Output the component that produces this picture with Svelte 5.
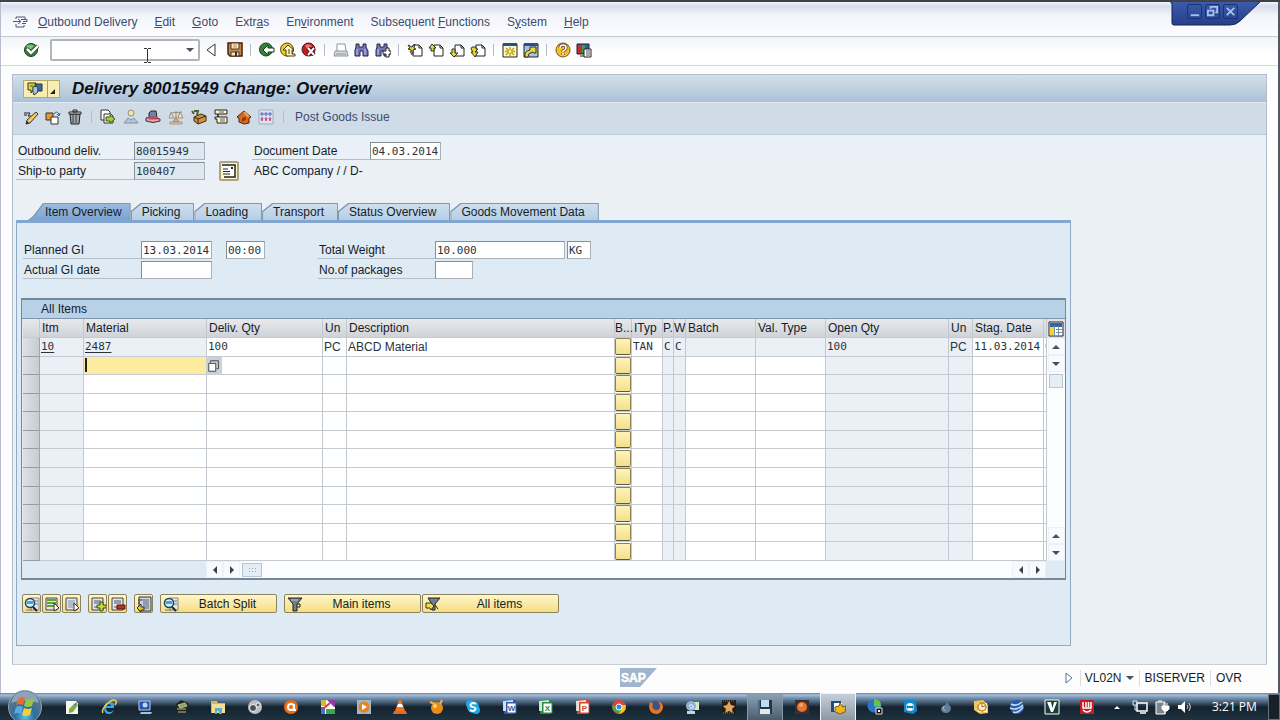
<script lang="ts">
  type Column = {
    key: string;
    label: string;
    width?: number;
    shaded?: boolean;
  };

  const menus = [
    ["", "O", "utbound Delivery"],
    ["", "E", "dit"],
    ["", "G", "oto"],
    ["Extr", "a", "s"],
    ["En", "v", "ironment"],
    ["Subsequent ", "F", "unctions"],
    ["S", "y", "stem"],
    ["", "H", "elp"],
  ];

  const toolGroups = [
    ["back", "up", "exit"],
    ["print", "find", "findNext"],
    ["firstPage", "prevPage", "nextPage", "lastPage"],
    ["newSession", "shortcut"],
    ["help", "layout"],
  ];

  const editTools = ["pencil", "other", "trash"];
  const docTools = ["copy", "partner", "hat", "scale", "pack", "log", "house", "serial"];

  const tabs = ["Item Overview", "Picking", "Loading", "Transport", "Status Overview", "Goods Movement Data"];

  const columns: Column[] = [
    { key: "itm", label: "Itm", width: 44, shaded: true },
    { key: "material", label: "Material", width: 123 },
    { key: "qty", label: "Deliv. Qty", width: 116 },
    { key: "un", label: "Un", width: 24 },
    { key: "desc", label: "Description" },
    { key: "b", label: "B...", width: 17 },
    { key: "ityp", label: "ITyp", width: 31 },
    { key: "p", label: "P.", width: 11, shaded: true },
    { key: "w", label: "W", width: 12, shaded: true },
    { key: "batch", label: "Batch", width: 70 },
    { key: "val", label: "Val. Type", width: 70 },
    { key: "open", label: "Open Qty", width: 123, shaded: true },
    { key: "un2", label: "Un", width: 24, shaded: true },
    { key: "stag", label: "Stag. Date", width: 71 },
    { key: "more", label: "", width: 3 },
  ];

  const item: Record<string, string> = {
    itm: "10",
    material: "2487",
    qty: "100",
    un: "PC",
    desc: "ABCD Material",
    ityp: "TAN",
    p: "C",
    w: "C",
    open: "100",
    un2: "PC",
    stag: "11.03.2014",
    more: "0",
  };
  const sans = ["un", "desc", "un2"];
  const locked = ["material", "batch", "val"];
  const rows = Array.from({ length: 12 }, (_, i) => i);

  const iconButtons = [["detail", "selectAll", "deselect"], ["insert", "remove"], ["moveRow"]];
  const textButtons = [
    { icon: "detail", label: "Batch Split", cls: "split" },
    { icon: "filter", label: "Main items", cls: "wide" },
    { icon: "filterOff", label: "All items", cls: "wide close" },
  ];

  const taskMain = [
    "notepad", "ie", "remote", "bug", "folder", "camera", "avast", "picasa", "media", "vlc", "gom",
    "skype", "word", "excel", "ppt", "chrome", "firefox", "messenger", "star", "disk", "record", "sap", "pie",
  ];
  const taskMore = ["viewer", "drop", "outlook", "earth", "vee", "red"];

  const page = `<path d="M6 3h6l3 3v8H6z" fill="#fff" stroke="#222"/><path d="M12 3v3h3" fill="none" stroke="#222"/>`;
  const grid = `<path d="M2 2h11v12H2z" fill="#dfe6ee" stroke="#444"/>`;
  const binoculars = `<path d="M2 2h3v3h4V2h3v3l2 4v5H9V9H6v5H1V8l1-3z" fill="#7577b4" stroke="#24244c"/><path d="M3 7v6M11 7v6" stroke="#c4c5e8"/>`;
  const office = (c: string, t: string) =>
    `<path d="M2 1h12v11l-2 3H2z" fill="${c}"/><path d="M1 2l10-1v2H4v9H1z" fill="#fff" opacity=".8"/><path d="M5 4h9v10H5z" fill="#fff" stroke="${c}"/><text x="9.5" y="12" font-size="8" font-weight="700" text-anchor="middle" fill="${c}" font-family="Liberation Sans">${t}</text>`;

  const icons: Record<string, string> = {
    menu: `<path d="M4 5V3h9v2M4 10v3h8v-2" fill="none" stroke="#4a5878"/><path d="M1 7.500h7M6 5l3 2.500L6 10M9 5.500h6v2h-4M10 9.500h4" fill="none" stroke="#4a5878"/>`,
    check: `<circle cx="8" cy="8" r="6.500" fill="#39863c" stroke="#173d1b"/><path d="M3 4q5-3 8 0L7 8z" fill="#82c184"/><path d="M4 7l4 4 7-7" fill="none" stroke="#173d1b" stroke-width="4"/><path d="M4 7l4 4 7-7" fill="none" stroke="#fff" stroke-width="2.500"/>`,
    enter: `<path d="M12 2v12L4 8z" fill="#fff" stroke="#333"/>`,
    save: `<path d="M1 1h14v13H3l-2-2z" fill="#c88748" stroke="#3d2411" stroke-width="1.500"/><path d="M4 1h8v6H4z" fill="#f8ecd1" stroke="#55351d"/><path d="M6 3h4M6 5h4" stroke="#c88748"/><path d="M4 10h8v4H4z" fill="#f1e6d4" stroke="#55351d"/><path d="M9 10v4" stroke="#333" stroke-width="2"/>`,
    back: `<circle cx="7" cy="7.500" r="6.500" fill="#348438" stroke="#173d1b"/><path d="M4 8l5-5v3h6v4H9v3z" fill="#fff" stroke="#143a18"/>`,
    up: `<circle cx="7" cy="7.500" r="6.500" fill="#eacb28" stroke="#5b4a14"/><path d="M3 8l5-5 6 5h-2v4h3v2H6V8z" fill="#fff9bd" stroke="#493b13"/><path d="M9 7v5" stroke="#493b13"/>`,
    exit: `<circle cx="7.500" cy="7.500" r="6.500" fill="#c11d22" stroke="#53141a"/><path d="M4 3q4-2 7 1L6 7z" fill="#e6777a"/><path d="M7 6l6 7M13 6l-6 7" stroke="#540b0d" stroke-width="4"/><path d="M7 6l6 7M13 6l-6 7" stroke="#fff" stroke-width="2"/>`,
    print: `<path d="M4 9V2h8l1 7" fill="#fff" stroke="#8e959d"/><path d="M2 9h12l1 5H1z" fill="#d6dade" stroke="#8e959d"/><path d="M3 12h10" stroke="#8e959d"/>`,
    find: binoculars,
    findNext: binoculars + `<path d="M8 9h3V6h3v3h2v3h-2v3h-3v-3H8z" fill="#fff" stroke="#222"/>`,
    firstPage: page + `<path d="M1 3l4 2 3-3-1 4 2 1-3 1v4L4 8 1 7l2-1z" fill="#e3d928" stroke="#333"/><path d="M3 9l2 4" stroke="#333"/>`,
    prevPage: page + `<path d="M1 6l3-4 4 4H6v3H3V6z" fill="#e3d928" stroke="#333"/>`,
    nextPage: page + `<path d="M3 7h3v4h3l-4 4-4-4h2z" fill="#e3d928" stroke="#333"/>`,
    lastPage: page + `<path d="M2 5h4v2h2L5 10h3l-3 5-4-5h2L1 7z" fill="#e3d928" stroke="#333"/>`,
    newSession: `<path d="M1 2h14v13H1z" fill="#fff8c8" stroke="#222"/><path d="M1 1h14v3H1z" fill="#28508f"/><path d="M4 6l3 3m2 0l3-3M4 13l3-3m2 0l3 3M8 5v3m0 3v3M3 9.500h3m4 0h3" stroke="#c3a60c" stroke-width="1.500"/>`,
    shortcut: `<path d="M1 2h14v13H1z" fill="#a9c4dd" stroke="#222"/><path d="M1 1h14v3H1z" fill="#28508f"/><path d="M2 15q-1-6 5-7V5h6v6h-2L9 10q-4 1-4 5z" fill="#efd735" stroke="#333"/>`,
    help: `<circle cx="8" cy="8" r="7" fill="#f4c22c" stroke="#6f5a2d"/><path d="M5 6q0-3 3-3t3 2.500Q11 8 8 9v1M8 11v2" fill="none" stroke="#6b2a20" stroke-width="3"/><path d="M5 6q0-3 3-3t3 2.500Q11 8 8 9v1M8 11v2" fill="none" stroke="#fff" stroke-width="1.600"/>`,
    layout: `<path d="M1 2h12v10H1z" fill="#3457b6" stroke="#222"/><path d="M2 3h4v8H2z" fill="#c52e35"/><path d="M6 3h3v8H6z" fill="#35a44c"/><path d="M4 14h5" stroke="#222"/><path d="M8 7h7v8H8z" fill="#fff" stroke="#222"/><path d="M10 9h4M10 11h4M10 13h4" stroke="#555"/>`,
    title: `<path d="M1 2h8v7H6l-2 3V9H1z" fill="#e9d530" stroke="#333"/><path d="M8 3h7v7H8z" fill="#396a9e" stroke="#203547"/><path d="M6 6q4-2 5 2t-4 6q-2-4-1-8z" fill="#a8c7d6" stroke="#263746"/><path d="M3 5h3" stroke="#444"/>`,
    pencil: `<path d="M1 4h6l-2 3h3M1 6h3" stroke="#222" fill="none"/><path d="M13 3l2 2-8 9-4 1 1-4z" fill="#f3cc65" stroke="#333"/><path d="M3 15l1-3 2 2z" fill="#222"/>`,
    other: `<path d="M1 4h7v7H1z" fill="#e6982b" stroke="#333"/><path d="M6 8h7v7H6z" fill="#fff" stroke="#333"/><path d="M9 5q2-4 5 0v2m-2-2l2 2 1-3" fill="none" stroke="#41618c"/>`,
    trash: `<path d="M3 5h10l-1 10H4z" fill="#9da4ac" stroke="#222"/><path d="M2 3h12v2H2zM6 1h4v2H6z" fill="#e6e8ea" stroke="#222"/><path d="M6 6v8M9 6v8" stroke="#444"/>`,
    copy: `<path d="M1 1h7l2 2v8H1z" fill="#fff" stroke="#333"/><path d="M4 5h7l2 2v7H4z" fill="#fff" stroke="#333"/><path d="M6 8h4V6l5 4-5 4v-2H6z" fill="#a6cc38" stroke="#365b1c"/>`,
    partner: `<circle cx="8" cy="4" r="3" fill="#eee2b0" stroke="#988f74"/><path d="M1 14l4-5 3 2 3-2 4 5z" fill="#b3c5d7" stroke="#7f93a6"/>`,
    hat: `<path d="M4 9V4l2-2h5l1 7z" fill="#6f84a8" stroke="#222"/><path d="M1 9q7-2 14 1v2q-7 3-14 0z" fill="#e7a3b2" stroke="#333"/><path d="M4 9h8" stroke="#d43f5c" stroke-width="3"/>`,
    scale: `<path d="M2 13h12v2H2zM8 2v9M2 4l12-1M3 4l-2 5h5zM12 3l-2 6h5z" fill="#f1e4cc" stroke="#9c8c79"/><path d="M5 13l3-5 3 5z" fill="#dda47c" stroke="#9c8c79"/>`,
    pack: `<path d="M3 8l7-3 5 2v5l-8 3-4-3z" fill="#d79235" stroke="#3b2a1a"/><path d="M3 8l4 2 8-3M7 10v5" fill="none" stroke="#3b2a1a"/><path d="M1 2l2 3M3 2h4l-1 4" fill="none" stroke="#4b622c" stroke-width="2"/>`,
    log: `<path d="M2 1h12v4H5v3h9v6H4v-4H2V8h3V5H2z" fill="#fff7c7" stroke="#222"/><path d="M6 3h5M7 10h5M7 12h5" stroke="#666"/>`,
    house: `<path d="M1 8l7-6 7 6-2 1v5l-5 1-5-2V9z" fill="#dd681a" stroke="#4c230d"/><path d="M6 13V9l4-1v3l-3 1" fill="#863a15"/><path d="M8 3l5 5" stroke="#f3a15b" stroke-width="2"/>`,
    serial: `<path d="M1 1h14v14H1z" fill="#dbe2f4" stroke="#a4acc0"/><path d="M3 6V4h2v2zM7 6V4h2v2zM11 6V4h2v2z" fill="none" stroke="#5363be"/><path d="M3 9l1 3 1-3zM7 9l1 3 1-3zM11 9l1 3 1-3z" fill="none" stroke="#c04b75"/>`,
    address: `<path d="M2 2h12v12H2z" fill="#fff"/><path d="M1 2h13v12H3" fill="none" stroke="#222" stroke-width="1.500"/><path d="M2 6h5M2 8.500h7M2 11h7" stroke="#222"/><path d="M10 4h2v2h-2z" fill="#222"/>`,
    f4: `<path d="M4 4V2h9v9h-2" fill="none" stroke="#333"/><path d="M2 5h8v9H2z" fill="#fff" stroke="#333"/>`,
    config: `<path d="M1 1h14v14H1z" fill="#fff" stroke="#222"/><path d="M2 2h12v4H2z" fill="#2d67a9"/><path d="M2 6h5v8H2z" fill="#f2d338"/><path d="M6.500 5v9M10.500 5v9M8 8.500h6M8 11.500h6" stroke="#7090b5"/>`,
    detail: `<path d="M7 2h8v12H7z" fill="#e3e5e7" stroke="#888"/><path d="M11 5h3M11 8h3" stroke="#777"/><circle cx="6" cy="7" r="4.500" fill="#d8f1fc" stroke="#194260" stroke-width="1.500"/><path d="M3 5h6v3H3z" fill="#4ba2d2"/><path d="M9 11l4 4" stroke="#222" stroke-width="2"/><path d="M2 14h6" stroke="#777"/>`,
    selectAll: grid + `<path d="M3 4h9M3 7h9M3 10h9" stroke="#5da52c" stroke-width="2"/><path d="M10 7l5 5-5 3z" fill="#fff" stroke="#333"/>`,
    deselect: grid + `<path d="M4 5h7M4 7h7M4 9h7M4 11h5" stroke="#7b91a9"/><path d="M10 7l5 5-5 3z" fill="#fff" stroke="#333"/>`,
    insert: grid + `<path d="M4 5h7M4 7h7M4 11h5" stroke="#555"/><path d="M7 9h3V6h3v3h3v3h-3v3h-3v-3H7z" fill="#c5d83d" stroke="#31541c"/>`,
    remove: grid + `<path d="M4 5h7M4 7h7M4 11h5" stroke="#555"/><path d="M7 9h8v4H7z" fill="#c72c22" stroke="#4d1811"/>`,
    moveRow: `<path d="M3 1h12v14H3z" fill="#cdd4df" stroke="#333"/><path d="M6 4h7M7 6h6M7 8h6M7 10h6M6 12h7" stroke="#56657d"/><path d="M1 12l4-4v3h3v3H5v2z" fill="#e3cb29" stroke="#333"/><path d="M2 4h4M2 7h2" stroke="#333"/>`,
    filter: `<path d="M1 2h14l-5 6v7H6V8z" fill="#737f8c" stroke="#222"/><path d="M4 4h7" stroke="#c1c9d1"/><path d="M10 8h3v3h-3" fill="none" stroke="#222"/>`,
    filterOff: `<path d="M3 2h12l-5 6v6H7V8z" fill="#737f8c" stroke="#222"/><path d="M1 7h5l3 3-3 4-1-2H1z" fill="#f3dd4b" stroke="#333"/><path d="M10 9l3 4" stroke="#222"/>`,
    notepad: `<path d="M2 2h10l2 2v11H2z" fill="#f5f6ed"/><path d="M5 10l6-6 3 2-5 7-4 1z" fill="#85ad43"/><path d="M10 6l4-3" stroke="#376b88"/>`,
    ie: `<path d="M13 9H5q0 4 4 4 2 0 4-2-2 4-5 4-5 0-5-6t6-6q5 0 4 6M5.500 7h4.500q0-2-2-2t-2.500 2" fill="#39a7e8"/><path d="M2 14Q0 11 6 5t9-3q1 1-1 4" fill="none" stroke="#f6cf40" stroke-width="1.500"/>`,
    remote: `<path d="M2 2h11v9H2z" fill="#2151b6" stroke="#b9d0f0"/><circle cx="8" cy="6" r="2.500" fill="#bcd7fa"/><path d="M4 13h11l-1 2H3z" fill="#acbfd8"/>`,
    bug: `<path d="M2 5l5-4 7 3 1 6-5 5-8-2z" fill="#23271e"/><path d="M4 6l7-2 2 3-7 2zM3 10h9M4 13h8" fill="#93a367" stroke="#b9bd96"/>`,
    folder: `<path d="M1 2h6l1 2h7v10H1z" fill="#dcb451"/><path d="M2 5h13v9H2z" fill="#f3df92"/><path d="M5 9h7v6H9v-3H7v3H5z" fill="#56aed4"/>`,
    camera: `<circle cx="8" cy="8" r="7" fill="#b9bfc4"/><circle cx="6" cy="9" r="3.500" fill="#4a5257" stroke="#f2f3f4"/><circle cx="11" cy="6" r="2" fill="#5a6268" stroke="#f2f3f4"/>`,
    avast: `<circle cx="8" cy="8" r="7" fill="#ed6d16"/><circle cx="8" cy="8" r="3" fill="none" stroke="#fff" stroke-width="2"/><path d="M11 5v6h2" fill="none" stroke="#fff" stroke-width="2"/>`,
    picasa: `<path d="M1 1h14v14H1z" fill="#fff"/><path d="M1 1h5v6H1z" fill="#d6b72e"/><path d="M1 8h4v7H1z" fill="#3877cd"/><path d="M6 10h9v5H6z" fill="#43a44d"/><path d="M7 1l7 7h1V1z" fill="#8e3e9d"/><path d="M3 10l7-6" stroke="#d3413d" stroke-width="2"/>`,
    media: `<path d="M1 1h14v14H1z" fill="#9db8ce"/><circle cx="8" cy="8" r="5.500" fill="#e8801e"/><path d="M6 5l5 3-5 3z" fill="#fff"/>`,
    vlc: `<path d="M7 1h2l4 11H3z" fill="#ef7920"/><path d="M6 5h4l1 3H5z" fill="#fff"/><path d="M2 12h12l1 3H1z" fill="#e06c1a"/>`,
    gom: `<circle cx="8" cy="9" r="6" fill="#e98b19"/><circle cx="6" cy="7" r="2" fill="#fbd57d"/><path d="M1 3l5 2M13 1l-2 4" stroke="#f3b247" stroke-width="2"/>`,
    skype: `<circle cx="8" cy="8" r="6" fill="#1fa9e4"/><circle cx="5" cy="5" r="4" fill="#1fa9e4"/><circle cx="11" cy="11" r="4" fill="#1fa9e4"/><path d="M11 5Q8 3 6 5t2 3 2 3-5 0" fill="none" stroke="#fff" stroke-width="1.800"/>`,
    word: office("#2f5ca8", "W"),
    excel: office("#2d8746", "X"),
    ppt: office("#ce4630", "P"),
    chrome: `<circle cx="8" cy="8" r="7" fill="#e34335"/><path d="M1 6q0 6 7 9l3-6-3-1z" fill="#42a951"/><path d="M8 15q7-1 7-9H8l3 3z" fill="#f4c526"/><circle cx="8" cy="8" r="3" fill="#4384d9" stroke="#fff"/>`,
    firefox: `<circle cx="8" cy="8" r="6" fill="#33548d"/><path d="M2 3q1 1 3 1-2 5 2 7 4 1 5-3 0-4-3-6 7 2 6 7-2 6-7 6-7-1-7-8z" fill="#e87521"/>`,
    messenger: `<path d="M6 3h9v8H6z" fill="#dce6c7"/><circle cx="7" cy="7" r="5" fill="#8eb3d5"/><path d="M3 12h8v3H3z" fill="#c5d4e2"/><path d="M5 7q3-3 4 0t-3 2" fill="none" stroke="#fff"/>`,
    star: `<path d="M1 1h14v14H1z" fill="#221d19"/><path d="M8 2l2 4 4 1-3 3 1 4-4-2-4 2 1-4-3-3 4-1z" fill="#e2a45c"/><path d="M2 2h12M2 14h12" stroke="#918878" stroke-dasharray="1 1"/>`,
    disk: `<path d="M1 1h14v14H1z" fill="#20364a"/><path d="M4 1h8v7H4z" fill="#c0dcf0"/><path d="M3 10h10v5H3z" fill="#e2e8ec"/><path d="M2 1v14" stroke="#6e9fc0"/>`,
    record: `<path d="M1 1h14v14H1z" fill="#3b302e"/><circle cx="8" cy="8" r="5" fill="#e87431"/><circle cx="7" cy="6" r="2" fill="#f3a16a"/>`,
    sap: `<path d="M1 2h10v11H1z" fill="#244d74"/><path d="M4 4h8v8H4z" fill="#fff"/><path d="M5 8l4-1 1-3 3 4 3-1-1 6-5 2-5-2z" fill="#eeb51f" stroke="#7b5b15"/>`,
    pie: `<circle cx="7" cy="7" r="6.500" fill="#2875cc"/><path d="M7 7V0q7 0 7 7z" fill="#67c344"/><path d="M7 7h7q-1 4-3 5z" fill="#36a2bd"/><path d="M9 9h6v6H9z" fill="#111" stroke="#ddd"/><path d="M11 11h2v2h-2z" fill="#fff"/>`,
    viewer: `<path d="M2 1h12l1 11-4 3-9-2z" fill="#1385cb"/><circle cx="8" cy="8" r="4" fill="#f1f8fd"/><path d="M4 8l2-2v1h4V6l2 2-2 2V9H6v1z" fill="#127bb9"/>`,
    drop: `<path d="M9 1q1 5 4 7 0 6-5 6t-5-5q1-2 4-3 2-2 2-5z" fill="#617e9c"/><path d="M6 7q-2 3 1 5" stroke="#a9bdd2" fill="none"/>`,
    outlook: `<path d="M1 2l9-1 5 5v8l-8 1-6-4z" fill="#ecc565"/><path d="M5 4h9v9H5z" fill="#fff5d2"/><circle cx="9" cy="8" r="4" fill="none" stroke="#cd7e17" stroke-width="1.500"/><path d="M9 5v3l3-1" fill="none" stroke="#b76811"/>`,
    earth: `<circle cx="8" cy="8" r="7" fill="#2859ae"/><path d="M2 5q5 3 11-2M1 9q7 3 13-3M4 13q5 2 10-5" stroke="#c7dcf6" stroke-width="1.500" fill="none"/>`,
    vee: `<path d="M1 1h14v14H1z" fill="#153f37" stroke="#fff"/><path d="M3 3h4l1.500 6L10 3h3l-4 10H7z" fill="#fff"/>`,
    red: `<path d="M1 1h14v14H1z" fill="#c41c23"/><path d="M4 3v6h8V3M7 3v5M9.500 3v5M4 11q4 4 8 0" fill="none" stroke="#fff" stroke-width="1.500"/>`,
    network: `<path d="M5 4h10v8H5zM8 14h6" fill="none" stroke="#fff" stroke-width="1.500"/><path d="M1 2h4v4H1zM3 6v5h2" fill="none" stroke="#dce5ec"/>`,
    power: `<path d="M2 3h9v12H2z" fill="#7a858e" stroke="#fff"/><path d="M4 2h4M10 4v3M13 4v3M8 7h7v3l-2 2h-3L8 10zM11 12v3" fill="#fff" stroke="#fff"/>`,
    sound: `<path d="M2 6h3l4-4v12l-4-4H2z" fill="#fff"/><path d="M11 6q2 2 0 4M13 4q3 4 0 8" fill="none" stroke="#cbd4da"/>`,
  };
</script>

{#snippet icon(name: string)}
  <svg class="icon" viewBox="0 0 16 16" aria-hidden="true">{@html icons[name]}</svg>
{/snippet}

{#snippet arrow(dir: string)}
  <button class="arrow" aria-label="Scroll {dir}"><span class={dir}></span></button>
{/snippet}

<div class="screen">
  <div class="window-controls">
    <svg class="corner" viewBox="0 0 92 26" aria-hidden="true">
      <defs>
        <linearGradient id="corner" x2="0" y2="1">
          <stop stop-color="#3c5cae" />
          <stop offset="1" stop-color="#253f88" />
        </linearGradient>
      </defs>
      <path d="M0 0l2 3v19q0 2 2 2h56q6 0 10-4L91 0z" fill="url(#corner)" stroke="#14224e" />
    </svg>
    <div class="control-buttons">
      <button aria-label="Minimize"><svg viewBox="0 0 14 14"><path d="M3 11h9" /></svg></button>
      <button aria-label="Restore"><svg viewBox="0 0 14 14"><path d="M5 4V2h7v6h-2M2 6h6v5H2z" /></svg></button>
      <button aria-label="Close"><svg viewBox="0 0 14 14"><path d="M3 3l8 8M11 3l-8 8" /></svg></button>
    </div>
  </div>

  <nav class="menubar">
    <button class="plain" aria-label="Window menu">{@render icon("menu")}</button>
    {#each menus as [before, key, after]}
      <button class="menu"><span>{before}<u>{key}</u>{after}</span></button>
    {/each}
  </nav>

  <div class="toolbar">
    <button class="tool check" aria-label="Enter">{@render icon("check")}</button>
    <div class="command">
      <input aria-label="Command" />
      <span class="down"></span>
      <svg class="ibeam" viewBox="0 0 7 15" aria-hidden="true">
        <path d="M0 .5h3M4 .5h3M3.500 1v13M0 14.500h3M4 14.500h3" stroke="#333" />
      </svg>
    </div>
    <button class="tool" aria-label="Close command field">{@render icon("enter")}</button>
    <button class="tool save" aria-label="Save">{@render icon("save")}</button>
    {#each toolGroups as group}
      <span class="sep"></span>
      {#each group as name}
        <button class="tool" aria-label={name}>{@render icon(name)}</button>
      {/each}
    {/each}
  </div>

  <main>
    <header class="titlebar">
      <button class="services" aria-label="Services for object">
        {@render icon("title")}
        <span class="corner-mark"></span>
      </button>
      <h1>Delivery 80015949 Change: Overview</h1>
    </header>

    <div class="appbar">
      {#each editTools as name}
        <button class="tool" aria-label={name}>{@render icon(name)}</button>
      {/each}
      <span class="sep"></span>
      <div class="doc-tools">
        {#each docTools as name}
          <button class="tool" aria-label={name}>{@render icon(name)}</button>
        {/each}
      </div>
      <span class="sep"></span>
      <button class="post">Post Goods Issue</button>
    </div>

    <div class="content">
      <div class="head-form">
        <label for="deliv">Outbound deliv.</label>
        <input id="deliv" class="readonly" value="80015949" readonly />
        <span></span>
        <label for="docdate">Document Date</label>
        <input id="docdate" value="04.03.2014" />
        <label for="shipto">Ship-to party</label>
        <input id="shipto" class="readonly" value="100407" readonly />
        <button class="address" aria-label="Address">{@render icon("address")}</button>
        <span class="company">ABC Company / / D-</span>
      </div>

      <div class="tabs" role="tablist">
        {#each tabs as tab, i}
          <button class="tab" class:active={i === 0} role="tab" aria-selected={i === 0}><span>{tab}</span></button>
        {/each}
      </div>

      <section class="panel">
        <div class="item-form">
          <div class="dates">
            <label for="planned">Planned GI</label>
            <input id="planned" value="13.03.2014" />
            <input class="time" aria-label="Planned GI time" value="00:00" />
            <label for="actual">Actual GI date</label>
            <input id="actual" />
          </div>
          <div class="weights">
            <label for="weight">Total Weight</label>
            <div class="pair">
              <input id="weight" class="weight" value="10.000" />
              <input class="unit" aria-label="Weight unit" value="KG" />
            </div>
            <label for="packages">No.of packages</label>
            <input id="packages" class="packages" />
          </div>
        </div>

        <div class="items">
          <h2>All Items</h2>
          <div class="items-body">
            <table>
              <colgroup>
                <col class="selcol" />
                {#each columns as col}
                  <col style={col.width ? `width:${col.width}px` : undefined} />
                {/each}
              </colgroup>
              <thead>
                <tr>
                  <th></th>
                  {#each columns as col}
                    <th class:narrow={col.width && col.width < 20}>{col.label}</th>
                  {/each}
                </tr>
              </thead>
              <tbody>
                {#each rows as row}
                  <tr>
                    <td class="select"></td>
                    {#each columns as col}
                      <td
                        class:shaded={col.shaded || (row === 0 && locked.includes(col.key))}
                        class:sans={sans.includes(col.key)}
                        class:split-cell={col.key === "b"}
                        class:active={row === 1 && col.key === "material"}
                      >
                        {#if col.key === "b"}
                          <button class="batch" aria-label="Batch split, row {row + 1}"></button>
                        {:else if row === 0 && (col.key === "itm" || col.key === "material")}
                          <a href="#{col.key}">{item[col.key]}</a>
                        {:else if row === 0}
                          {item[col.key] ?? ""}
                        {:else if row === 1 && col.key === "material"}
                          <input aria-label="Material" />
                          <button class="f4" aria-label="Search material">{@render icon("f4")}</button>
                        {/if}
                      </td>
                    {/each}
                  </tr>
                {/each}
              </tbody>
            </table>
            <div class="vscroll">
              <button class="config" aria-label="Table settings">{@render icon("config")}</button>
              {@render arrow("up")}
              {@render arrow("down")}
              <span class="vthumb"></span>
              <span class="fill"></span>
              {@render arrow("up")}
              {@render arrow("down")}
            </div>
          </div>
          <div class="hscroll">
            <div class="htrack">
              {@render arrow("left")}
              {@render arrow("right")}
              <span class="hthumb"></span>
              <span class="fill"></span>
              {@render arrow("left")}
              {@render arrow("right")}
            </div>
          </div>
        </div>

        <div class="actions">
          {#each iconButtons as group}
            <div class="action-group">
              {#each group as name}
                <button class="yellow" aria-label={name}>{@render icon(name)}</button>
              {/each}
            </div>
          {/each}
          {#each textButtons as button}
            <button class="yellow text {button.cls}">
              {@render icon(button.icon)}
              <span>{button.label}</span>
            </button>
          {/each}
        </div>
      </section>
    </div>
  </main>

  <footer class="status">
    <svg class="logo" viewBox="0 0 37 19" role="img" aria-label="SAP">
      <path d="M0 0h37L20 19H0z" fill="#9fb5cd" />
      <text x="1" y="14" font-family="Liberation Sans" font-weight="700" font-size="12" fill="#fff" stroke="#fff" stroke-width=".5">SAP</text>
    </svg>
    <div class="status-fields">
      <svg class="play" viewBox="0 0 8 12" aria-hidden="true"><path d="M1 1l6 5-6 5z" fill="#fff" stroke="#55749a" /></svg>
      <button class="system">VL02N <span class="down"></span></button>
      <span>BISERVER</span>
      <span>OVR</span>
    </div>
  </footer>

  <div class="taskbar">
    <button class="orb" aria-label="Start">
      <svg viewBox="0 0 36 36">
        <defs>
          <radialGradient id="orb" cy=".8">
            <stop stop-color="#55c4e8" />
            <stop offset=".6" stop-color="#2c6f9f" />
            <stop offset="1" stop-color="#52718e" />
          </radialGradient>
        </defs>
        <circle cx="18" cy="18" r="16.500" fill="url(#orb)" stroke="#8ba3b8" />
        <path d="M4 14q2-11 14-12 12 1 14 12-14-5-28 0z" fill="#c5d5e2" opacity=".5" />
        <path d="M11 10q4-3 7-1l-2 7q-3-2-7 0z" fill="#ed6a2c" />
        <path d="M19 10q4 2 8 0l-2 7q-4 2-8 0z" fill="#95c84a" />
        <path d="M9 18q4-2 7 0l-2 7q-3-2-7 0z" fill="#57a9e6" />
        <path d="M17 19q4 2 8 0l-2 7q-4 2-8 0z" fill="#f8cc42" />
      </svg>
    </button>
    <div class="tasks main-tasks">
      {#each taskMain as name}
        <button class:pressed={name === "disk"} class:current={name === "sap"} aria-label={name}>{@render icon(name)}</button>
      {/each}
    </div>
    <div class="tasks more-tasks">
      {#each taskMore as name}
        <button aria-label={name}>{@render icon(name)}</button>
      {/each}
    </div>
    <div class="tray">
      <span class="up"></span>
      {@render icon("network")}
      {@render icon("power")}
      {@render icon("sound")}
      <time>3:21 PM</time>
      <button class="desktop" aria-label="Show desktop"></button>
    </div>
  </div>
</div>

<style>
  :global(body) {
    margin: 0;
  }

  .screen {
    position: relative;
    display: flex;
    flex-direction: column;
    min-height: 100vh;
    box-sizing: border-box;
    border-top: 2px solid #3f4048;
    background: #fdfdfe;
    color: #151c2a;
    font: 12px/16px "Liberation Sans", Arial, sans-serif;
    overflow: hidden;
  }

  .screen::after {
    content: "";
    position: absolute;
    inset: 0 0 28px;
    border-left: 1px solid #b9bdcd;
    border-right: 2px solid #555762;
    pointer-events: none;
  }

  button,
  input {
    box-sizing: border-box;
    margin: 0;
    font: inherit;
    color: inherit;
  }

  button {
    display: flex;
    align-items: center;
    justify-content: center;
    padding: 0;
    border: 0;
    background: none;
    white-space: nowrap;
  }

  input {
    min-width: 0;
    height: 18px;
    padding: 0 1px;
    border: 1px solid #a9b0b8;
    border-top-color: #858d96;
    border-left-color: #858d96;
    border-radius: 0;
    background: #fff;
    color: #2c323c;
    font: 11px/16px "DejaVu Sans Mono", "Liberation Mono", monospace;
    outline: none;
  }

  .icon {
    display: block;
    width: 16px;
    height: 16px;
    flex: none;
  }

  .up,
  .down,
  .left,
  .right {
    width: 0;
    height: 0;
    border: 4px solid transparent;
  }

  .up {
    border-top: 0;
    border-bottom-color: #4a4f59;
  }

  .down {
    border-bottom: 0;
    border-top-color: #4a4f59;
  }

  .left {
    border-left: 0;
    border-right-color: #3c414b;
  }

  .right {
    border-right: 0;
    border-left-color: #3c414b;
  }

  .fill {
    flex: 1;
  }

  /* window frame */
  .window-controls {
    position: absolute;
    top: -1px;
    right: 18px;
    width: 92px;
    height: 26px;
    z-index: 2;
  }

  .corner {
    display: block;
  }

  .control-buttons {
    position: absolute;
    top: 3px;
    left: 17px;
    display: flex;
    gap: 3px;
  }

  .control-buttons button {
    width: 15px;
    height: 15px;
    border: 1px solid #1b3273;
    border-radius: 2px;
  }

  .control-buttons svg {
    width: 13px;
    fill: none;
    stroke: #a9bfef;
    stroke-width: 2;
  }

  .menubar {
    display: flex;
    align-items: center;
    gap: 17px;
    height: 35px;
    padding: 5px 12px 0;
    box-sizing: border-box;
    border-bottom: 1px solid #c3c8d1;
    background: linear-gradient(#f2f5fa 0, #d6deec 4px, #f3f5fb 14px, #fdfdff);
    color: #3c4a6e;
  }

  .plain {
    margin-right: -7px;
  }

  .toolbar {
    display: flex;
    align-items: center;
    height: 29px;
    padding: 0 20px 2px;
    box-sizing: border-box;
    border-bottom: 1px solid #d5d9df;
    background: linear-gradient(#f1f3f7, #fff 60%);
  }

  .tool {
    width: 21px;
    height: 20px;
  }

  .check {
    margin-right: 9px;
  }

  .save {
    margin-left: 3px;
  }

  .command {
    position: relative;
    display: flex;
    align-items: center;
    width: 150px;
    height: 22px;
  }

  .command input {
    width: 100%;
    height: 22px;
    border: 2px solid #b1b5bb;
    border-radius: 2px;
  }

  .command .down {
    position: absolute;
    right: 6px;
  }

  .ibeam {
    position: absolute;
    left: 94px;
    top: 9px;
    width: 7px;
    height: 15px;
  }

  .sep {
    width: 1px;
    height: 12px;
    margin: 0 5px;
    background: #b4bdc9;
  }

  /* transaction window */
  main {
    display: flex;
    flex-direction: column;
    flex: 1;
    margin: 8px 13px 0 12px;
    border: 1px solid #b4bdca;
    border-bottom-color: #c9ced6;
    background: #ebf0f5;
  }

  .titlebar {
    display: flex;
    align-items: center;
    height: 27px;
    padding-left: 10px;
    border-bottom: 1px solid #e2ebf3;
    background: linear-gradient(#d2e0ea, #c1d3e1 45%, #aac1d8);
  }

  .services {
    position: relative;
    justify-content: flex-start;
    width: 37px;
    height: 18px;
    padding-left: 3px;
    border: 1px solid #b5a871;
    background: linear-gradient(90deg, #f9eeaf 23px, #a99d66 23px, #a99d66 24px, #f9eeaf 24px);
  }

  .corner-mark {
    position: absolute;
    right: 4px;
    bottom: 3px;
    border-left: 5px solid transparent;
    border-bottom: 5px solid #222;
  }

  h1 {
    margin: 0 0 0 12px;
    font: italic bold 17px/22px "Liberation Sans", Arial, sans-serif;
    color: #0b1018;
  }

  .appbar {
    display: flex;
    align-items: center;
    height: 27px;
    padding: 0 0 4px 7px;
    border-bottom: 1px solid #bccbd9;
    background: #cfdce7;
  }

  .appbar .tool {
    width: 22px;
  }

  .doc-tools {
    display: grid;
    grid-template-columns: repeat(8, 1fr);
    width: 181px;
  }

  .post {
    margin-left: 6px;
    color: #3c4a6e;
  }

  .content {
    flex: 1;
    padding: 6px 0 18px 3px;
    background: linear-gradient(#e9f1f8, #ebf0f5 60px);
  }

  label {
    height: 18px;
    border-bottom: 1px solid #b5bdc6;
    box-sizing: border-box;
    line-height: 18px;
    white-space: nowrap;
  }

  .head-form {
    display: grid;
    grid-template-columns: 118px 71px 47px 118px 71px;
    grid-auto-rows: 20px;
    align-items: center;
  }

  .head-form label {
    padding-left: 2px;
  }

  .readonly {
    background: #dde8f1;
  }

  .address {
    width: 20px;
    height: 20px;
    margin-left: 14px;
    border: 2px solid #aaa483;
    border-radius: 2px;
    background: #fbf3cd;
  }

  .company {
    padding-left: 2px;
    white-space: nowrap;
  }

  /* tabs */
  .tabs {
    display: flex;
    height: 17px;
    margin-top: 22px;
    padding-left: 12px;
  }

  .tab {
    position: relative;
    z-index: 0;
    padding: 1px 14px 0 11px;
    clip-path: polygon(0 100%, 0 8px, 10px 0, 100% 0, 100% 100%);
    background: #8397ad;
  }

  .tab::before {
    content: "";
    position: absolute;
    z-index: -1;
    inset: 1px 1px 0;
    clip-path: polygon(0 100%, 0 8px, 10px 0, 100% 0, 100% 100%);
    background: linear-gradient(#cfdfee, #b4cee5);
  }

  .tab.active {
    padding-left: 17px;
    padding-right: 9px;
  }

  .tab.active,
  .tab.active::before {
    clip-path: polygon(0 100%, 5px 13px, 15px 0, 100% 0, 100% 100%);
  }

  .tab.active::before {
    background: linear-gradient(#9bbbde, #7ba3d1);
  }

  .panel {
    box-sizing: border-box;
    width: 100%;
    max-width: 1055px;
    min-height: 426px;
    padding: 17px 4px 0;
    border: 1px solid #8fa9c7;
    border-top: 3px solid #82a6d0;
    background: #deeaf4;
  }

  .item-form {
    display: flex;
    gap: 53px;
    padding-left: 2px;
  }

  .dates,
  .weights {
    display: grid;
    grid-auto-rows: 20px;
    align-items: center;
  }

  .dates {
    grid-template-columns: 118px 71px 53px;
  }

  .dates label,
  .weights label {
    padding-left: 1px;
  }

  .weights {
    grid-template-columns: 117px auto;
  }

  .time {
    width: 39px;
    margin-left: 14px;
  }

  .pair {
    display: flex;
    gap: 2px;
  }

  .weight {
    width: 130px;
  }

  .unit {
    width: 24px;
  }

  .packages {
    width: 38px;
  }

  /* table control */
  .items {
    margin-top: 18px;
    border: 2px solid #76879a;
    border-left-width: 1px;
    border-right-width: 1px;
    background: #deeaf4;
  }

  h2 {
    margin: 0;
    padding-left: 19px;
    border-bottom: 1px solid #7f95ab;
    background: #b9d1e6;
    font: 12px/18px "Liberation Sans", Arial, sans-serif;
  }

  .items-body {
    display: flex;
    padding-left: 1px;
  }

  table {
    flex: 1;
    width: 0;
    height: 242px;
    table-layout: fixed;
    border-collapse: separate;
    border-spacing: 0;
  }

  .selcol {
    width: 17px;
  }

  th,
  td {
    height: 18px;
    box-sizing: border-box;
    padding: 0 0 0 1px;
    border-right: 1px solid #c2c8cf;
    border-bottom: 1px solid #c5cad0;
    text-align: left;
    white-space: nowrap;
    line-height: 16px;
  }

  th {
    height: 19px;
    padding-left: 2px;
    background: linear-gradient(#e7e9ec, #cfd3d8);
    font-weight: 400;
  }

  th.narrow {
    padding-left: 0;
  }

  td {
    overflow: hidden;
    background: #fff;
    color: #2c323c;
    font: 11px/16px "DejaVu Sans Mono", "Liberation Mono", monospace;
  }

  td.sans {
    font: 12px/16px "Liberation Sans", Arial, sans-serif;
  }

  td.shaded {
    background: #ebf0f6;
  }

  td.select {
    border-right-color: #9ea5ad;
    border-bottom-color: #979da5;
    background: linear-gradient(90deg, #dde0e4, #c8ccd1);
  }

  td.split-cell {
    padding: 0;
  }

  td a {
    color: inherit;
    text-underline-offset: 2px;
  }

  td.active {
    position: relative;
    overflow: visible;
    background: #fdec9f;
  }

  td.active input {
    display: block;
    width: 100%;
    height: 14px;
    border: 0;
    border-left: 2px solid #222;
    background: transparent;
  }

  .f4 {
    position: absolute;
    top: 0;
    left: 100%;
    width: 16px;
    height: 18px;
    background: #cbd1d9;
  }

  .f4 .icon {
    width: 14px;
    height: 14px;
  }

  .batch {
    width: 16px;
    height: 17px;
    border: 1px solid #8b8057;
    border-bottom-color: #5f5840;
    border-radius: 2px;
    background: linear-gradient(#fff3b9, #f4df89);
  }

  .vscroll {
    display: flex;
    flex-direction: column;
    align-items: center;
    width: 18px;
    background: #fbfcfe;
  }

  .config {
    width: 18px;
    height: 19px;
    background: #dfe3e7;
  }

  .arrow {
    width: 17px;
    height: 17px;
    border: 1px solid #edf1f6;
    background: #f8fafd;
  }

  .vthumb {
    width: 12px;
    height: 12px;
    margin-top: 2px;
    border: 1px solid #b7c5d4;
    background: #e5edf5;
  }

  .hscroll {
    padding: 0 19px 0 184px;
  }

  .htrack {
    display: flex;
    align-items: center;
    height: 17px;
    background: #fcfdff;
  }

  .hthumb {
    display: flex;
    width: 18px;
    height: 12px;
    margin-left: 2px;
    border: 1px solid #b7c5d4;
    background: #e5edf5;
  }

  .hthumb::before {
    content: "";
    width: 9px;
    height: 6px;
    margin: auto;
    background: radial-gradient(#8da3ba 1px, transparent 1px) 0 0 / 3px 3px;
  }

  .actions {
    display: flex;
    align-items: center;
    gap: 7px;
    margin-top: 14px;
    padding-left: 1px;
  }

  .action-group {
    display: flex;
    gap: 1px;
  }

  .yellow {
    width: 19px;
    height: 19px;
    border: 1px solid #8b835d;
    border-radius: 2px;
    background: linear-gradient(#fff7cb, #f5dd81);
  }

  .yellow.text {
    width: 117px;
    justify-content: flex-start;
    padding-left: 2px;
  }

  .yellow.text span {
    flex: 1;
  }

  .yellow.wide {
    width: 137px;
  }

  .yellow.close {
    margin-left: -6px;
  }

  /* status bar */
  .status {
    display: flex;
    align-items: center;
    justify-content: space-between;
    height: 25px;
    padding: 0 38px 3px 620px;
  }

  .logo {
    width: 37px;
    height: 19px;
  }

  .status-fields {
    display: flex;
    align-items: center;
  }

  .status-fields > span {
    padding-left: 5px;
    margin-left: 5px;
    border-left: 1px solid #d9dce1;
  }

  .play {
    width: 8px;
    height: 12px;
    margin-right: 7px;
  }

  .system {
    gap: 4px;
    padding: 0 0 0 4px;
    border-left: 1px solid #d9dce1;
  }

  /* desktop */
  .taskbar {
    display: flex;
    align-items: center;
    height: 28px;
    background: linear-gradient(#6e7e93 0, #a5bfdd 2px, #7592b0 5px, #34495e 11px, #15222e 14px, #1f3442);
    color: #fff;
  }

  .orb {
    width: 54px;
    height: 28px;
    padding-right: 4px;
    box-sizing: border-box;
  }

  .orb svg {
    width: 36px;
    height: 36px;
    flex: none;
  }

  .tasks {
    display: flex;
    height: 28px;
  }

  .tasks button {
    flex: 1;
    border: 1px solid transparent;
  }

  .main-tasks {
    flex: 838;
  }

  .more-tasks {
    flex: 212;
  }

  .tasks .pressed {
    border-color: #8797a7;
    background: linear-gradient(#8da1b5, #4a5c6d);
  }

  .tasks .current {
    border-color: #eef3f7;
    background: linear-gradient(#c5cfd8, #8b98a4);
  }

  .tray {
    display: flex;
    align-items: center;
    gap: 6px;
    width: 166px;
    padding-left: 9px;
  }

  .tray .up {
    border-bottom-color: #fff;
    margin-right: 6px;
    border-width: 0 3px 3px;
  }

  time {
    margin-left: 14px;
    font: 12px/16px "Open Sans", "Noto Sans", sans-serif;
    white-space: nowrap;
  }

  .desktop {
    width: 12px;
    height: 26px;
    margin-left: auto;
    border: 1px solid #66727c;
    background: #17212a;
  }
</style>
